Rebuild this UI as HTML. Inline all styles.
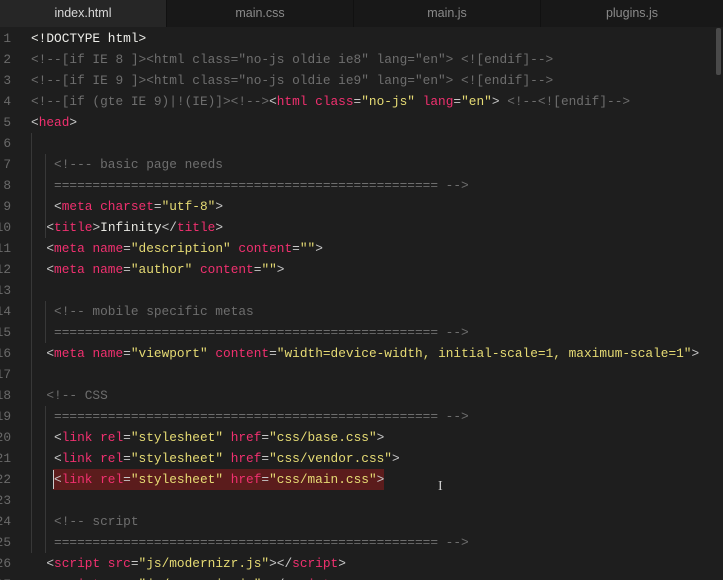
<!DOCTYPE html>
<html style="overflow:hidden"><head><style>
html,body{margin:0;padding:0;}
body{width:723px;height:580px;overflow:hidden;background:#1e1e1e;font-family:"Liberation Mono",monospace;font-size:12.8px;}
#w{position:relative;width:723px;height:580px;overflow:hidden;}
.tabs{position:absolute;left:0;top:0;width:723px;height:27px;background:#181818;}
.tab{position:absolute;top:0;height:27px;line-height:27px;text-align:center;font-family:"Liberation Sans",sans-serif;font-size:12.5px;color:#8a8a8a;border-right:1px solid #111;}
.tab.a{background:#262626;color:#d8d8d8;}
.ln{position:absolute;left:-20px;width:31px;text-align:right;color:#6a6a6a;height:21px;line-height:21px;}
.c{position:absolute;left:31px;white-space:pre;height:21px;line-height:21px;color:#e8e8e2;}
.t{color:#f0306f}.s{color:#e6db74}.p{color:#c8c8c8}.m{color:#6e6e6e}.w{color:#eeeeea}
.g{position:absolute;width:1px;background:#383838;}
</style></head><body><div id="w">
<div class="tabs">
<div class="tab a" style="left:0;width:166px">index.html</div>
<div class="tab" style="left:167px;width:186px">main.css</div>
<div class="tab" style="left:354px;width:186px">main.js</div>
<div class="tab" style="left:541px;width:182px">plugins.js</div>
</div>
<div class="g" style="left:31px;top:133px;height:420px"></div>
<div class="g" style="left:45px;top:154px;height:84px"></div>
<div class="g" style="left:45px;top:301px;height:42px"></div>
<div class="g" style="left:45px;top:406px;height:147px"></div>
<div style="position:absolute;left:53px;top:469px;width:331px;height:21px;background:#5b1c1c"></div>
<div style="position:absolute;left:53px;top:470px;width:1px;height:19px;background:#ccc"></div>
<div style="position:absolute;left:716px;top:28px;width:5px;height:47px;background:#4a4a4a;border-radius:2px"></div>
<div style="position:absolute;left:438px;top:479px;color:#ccc;font-size:14px;font-family:'Liberation Serif',serif">I</div>

<div class="ln" style="top:28px">1</div><div class="c" style="top:28px"><span class="w">&lt;!DOCTYPE html&gt;</span></div>
<div class="ln" style="top:49px">2</div><div class="c m" style="top:49px">&lt;!--[if IE 8 ]&gt;&lt;html class="no-js oldie ie8" lang="en"&gt; &lt;![endif]--&gt;</div>
<div class="ln" style="top:70px">3</div><div class="c m" style="top:70px">&lt;!--[if IE 9 ]&gt;&lt;html class="no-js oldie ie9" lang="en"&gt; &lt;![endif]--&gt;</div>
<div class="ln" style="top:91px">4</div><div class="c" style="top:91px"><span class="m">&lt;!--[if (gte IE 9)|!(IE)]&gt;&lt;!--&gt;</span><span class="p">&lt;</span><span class="t">html class</span><span class="p">=</span><span class="s">"no-js"</span> <span class="t">lang</span><span class="p">=</span><span class="s">"en"</span><span class="p">&gt;</span> <span class="m">&lt;!--&lt;![endif]--&gt;</span></div>
<div class="ln" style="top:112px">5</div><div class="c" style="top:112px"><span class="p">&lt;</span><span class="t">head</span><span class="p">&gt;</span></div>
<div class="ln" style="top:133px">6</div>
<div class="ln" style="top:154px">7</div><div class="c m" style="top:154px">   &lt;!--- basic page needs</div>
<div class="ln" style="top:175px">8</div><div class="c m" style="top:175px">   ================================================== --&gt;</div>
<div class="ln" style="top:196px">9</div><div class="c" style="top:196px">   <span class="p">&lt;</span><span class="t">meta charset</span><span class="p">=</span><span class="s">"utf-8"</span><span class="p">&gt;</span></div>
<div class="ln" style="top:217px">10</div><div class="c" style="top:217px">  <span class="p">&lt;</span><span class="t">title</span><span class="p">&gt;</span>Infinity<span class="p">&lt;/</span><span class="t">title</span><span class="p">&gt;</span></div>
<div class="ln" style="top:238px">11</div><div class="c" style="top:238px">  <span class="p">&lt;</span><span class="t">meta name</span><span class="p">=</span><span class="s">"description"</span> <span class="t">content</span><span class="p">=</span><span class="s">""</span><span class="p">&gt;</span></div>
<div class="ln" style="top:259px">12</div><div class="c" style="top:259px">  <span class="p">&lt;</span><span class="t">meta name</span><span class="p">=</span><span class="s">"author"</span> <span class="t">content</span><span class="p">=</span><span class="s">""</span><span class="p">&gt;</span></div>
<div class="ln" style="top:280px">13</div>
<div class="ln" style="top:301px">14</div><div class="c m" style="top:301px">   &lt;!-- mobile specific metas</div>
<div class="ln" style="top:322px">15</div><div class="c m" style="top:322px">   ================================================== --&gt;</div>
<div class="ln" style="top:343px">16</div><div class="c" style="top:343px">  <span class="p">&lt;</span><span class="t">meta name</span><span class="p">=</span><span class="s">"viewport"</span> <span class="t">content</span><span class="p">=</span><span class="s">"width=device-width, initial-scale=1, maximum-scale=1"</span><span class="p">&gt;</span></div>
<div class="ln" style="top:364px">17</div>
<div class="ln" style="top:385px">18</div><div class="c m" style="top:385px">  &lt;!-- CSS</div>
<div class="ln" style="top:406px">19</div><div class="c m" style="top:406px">   ================================================== --&gt;</div>
<div class="ln" style="top:427px">20</div><div class="c" style="top:427px">   <span class="p">&lt;</span><span class="t">link rel</span><span class="p">=</span><span class="s">"stylesheet"</span> <span class="t">href</span><span class="p">=</span><span class="s">"css/base.css"</span><span class="p">&gt;</span></div>
<div class="ln" style="top:448px">21</div><div class="c" style="top:448px">   <span class="p">&lt;</span><span class="t">link rel</span><span class="p">=</span><span class="s">"stylesheet"</span> <span class="t">href</span><span class="p">=</span><span class="s">"css/vendor.css"</span><span class="p">&gt;</span></div>
<div class="ln" style="top:469px">22</div><div class="c" style="top:469px">   <span class="p">&lt;</span><span class="t">link rel</span><span class="p">=</span><span class="s">"stylesheet"</span> <span class="t">href</span><span class="p">=</span><span class="s">"css/main.css"</span><span class="p">&gt;</span></div>
<div class="ln" style="top:490px">23</div>
<div class="ln" style="top:511px">24</div><div class="c m" style="top:511px">   &lt;!-- script</div>
<div class="ln" style="top:532px">25</div><div class="c m" style="top:532px">   ================================================== --&gt;</div>
<div class="ln" style="top:553px">26</div><div class="c" style="top:553px">  <span class="p">&lt;</span><span class="t">script src</span><span class="p">=</span><span class="s">"js/modernizr.js"</span><span class="p">&gt;&lt;/</span><span class="t">script</span><span class="p">&gt;</span></div>
<div class="ln" style="top:574px">27</div><div class="c" style="top:574px">  <span class="p">&lt;</span><span class="t">script src</span><span class="p">=</span><span class="s">"js/pace.min.js"</span><span class="p">&gt;&lt;/</span><span class="t">script</span><span class="p">&gt;</span></div>
</div></body></html>
